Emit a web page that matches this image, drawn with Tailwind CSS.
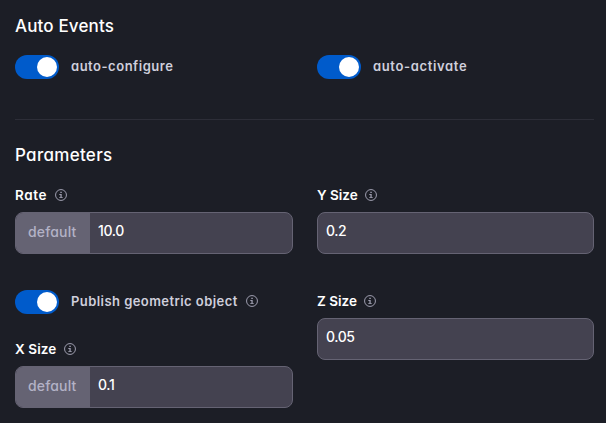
<!DOCTYPE html>
<html lang="en">
<head>
<meta charset="utf-8">
<title>Parameters</title>
<script src="https://cdn.jsdelivr.net/npm/@tailwindcss/browser@4"></script>
</head>
<body class="bg-[#1c1e26] w-[606px] h-[423px] overflow-hidden font-['Inter',sans-serif] [font-feature-settings:'cv11'] text-white">
<svg class="hidden">
  <symbol id="info" viewBox="0 0 12 12">
    <circle cx="6" cy="6" r="5.45" fill="none" stroke="currentColor" stroke-width="1"/>
    <path d="M5.3 2.8h1.5v1.3H5.3zM4.3 5h2.4v3.2h1.1v.9H4.2v-.9h1.2V5.9H4.3z" fill="currentColor"/>
  </symbol>
</svg>
<main class="pl-[15px] pr-3 pt-[14px]">
  <section class="h-[106px] border-b border-[#2d2e38]">
    <h2 class="text-[17px] leading-6 font-medium tracking-[0.15px]">Auto Events</h2>
    <div class="mt-[17px] grid grid-cols-[278px_277px] gap-x-6">
      <div class="flex h-6 items-center">
        <span class="flex h-6 w-11 justify-end rounded-full bg-[#005bcb] p-[2px]"><span class="size-5 rounded-full bg-white"></span></span>
        <span class="ml-3 pb-[2px] text-[13px] leading-5 font-semibold text-[#cfcfdc] tracking-[0.52px]">auto-configure</span>
      </div>
      <div class="flex h-6 items-center">
        <span class="flex h-6 w-11 justify-end rounded-full bg-[#005bcb] p-[2px]"><span class="size-5 rounded-full bg-white"></span></span>
        <span class="ml-3 pb-[2px] text-[13px] leading-5 font-semibold text-[#cfcfdc] tracking-[0.65px]">auto-activate</span>
      </div>
    </div>
  </section>
  <section class="pt-[23px]">
    <h2 class="text-[17px] leading-6 font-medium tracking-[0.3px]">Parameters</h2>
    <div class="mt-[18px] grid grid-cols-[278px_277px] gap-x-6">
      <div>
        <div class="flex h-5 items-center"><span class="w-10 text-[13.5px] leading-5 font-semibold tracking-[0.6px]">Rate</span><svg class="size-3 text-[#9d9dae]"><use href="#info"/></svg></div>
        <div class="mt-[7px] flex h-[42px] overflow-hidden rounded-lg border border-[#656373] bg-[#444250]">
          <span class="w-[74px] bg-[#656373] pl-3 pt-[9px] text-[14px] leading-5 font-medium text-[#b3b2c6] tracking-[0.15px]">default</span>
          <span class="pl-2 pt-2 text-[14px] leading-5 font-medium tracking-[-0.4px]">10.0</span>
        </div>
        <div class="mt-9 flex h-6 items-center">
          <span class="flex h-6 w-11 justify-end rounded-full bg-[#005bcb] p-[2px]"><span class="size-5 rounded-full bg-white"></span></span>
          <span class="ml-3 w-[175px] whitespace-nowrap pb-[2px] text-[13px] leading-5 font-semibold text-[#cfcfdc] tracking-[0.44px]">Publish geometric object</span><svg class="mb-[2px] size-3 text-[#9d9dae]"><use href="#info"/></svg>
        </div>
        <div class="mt-[25px] flex h-5 items-center"><span class="w-[49px] text-[13.5px] leading-5 font-semibold tracking-[0.1px]">X Size</span><svg class="size-3 text-[#9d9dae]"><use href="#info"/></svg></div>
        <div class="mt-[7px] flex h-[42px] overflow-hidden rounded-lg border border-[#656373] bg-[#444250]">
          <span class="w-[74px] bg-[#656373] pl-3 pt-[9px] text-[14px] leading-5 font-medium text-[#b3b2c6] tracking-[0.15px]">default</span>
          <span class="pl-2 pt-2 text-[14px] leading-5 font-medium tracking-[-0.4px]">0.1</span>
        </div>
      </div>
      <div>
        <div class="flex h-5 items-center"><span class="w-12 text-[13.5px] leading-5 font-semibold">Y Size</span><svg class="size-3 text-[#9d9dae]"><use href="#info"/></svg></div>
        <div class="mt-[7px] h-[42px] rounded-lg border border-[#656373] bg-[#444250] pl-2 pt-2 text-[14px] leading-5 font-medium tracking-[-0.4px]">0.2</div>
        <div class="mt-[37px] flex h-5 items-center"><span class="w-[47px] text-[13.5px] leading-5 font-semibold">Z Size</span><svg class="size-3 text-[#9d9dae]"><use href="#info"/></svg></div>
        <div class="mt-[7px] h-[42px] rounded-lg border border-[#656373] bg-[#444250] pl-2 pt-2 text-[14px] leading-5 font-medium tracking-[-0.4px]">0.05</div>
      </div>
    </div>
  </section>
</main>
</body>
</html>
